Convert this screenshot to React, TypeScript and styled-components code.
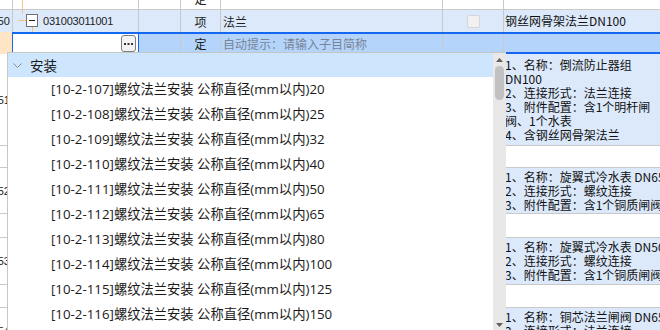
import React from 'react';
import styled, { createGlobalStyle } from 'styled-components';

const GlobalStyle = createGlobalStyle`
  html, body {
    margin: 0;
    padding: 0;
    background: #fff;
    overflow: hidden;
  }
  body {
    width: 660px;
    height: 330px;
    font-family: 'Noto Sans CJK SC', sans-serif;
  }
`;

const LINE = '#c9c9c9';
const ROW_BLUE = '#dce9fb';
const SEL_BLUE = '#b4d4fb';
const FOCUS = '#1367f0';

type descRow = {
	num: string;
	height: number;
	lines: string[];
};

const descRows: descRow[] = [
	{
		num: '51',
		height: 91,
		lines: [
			'1、名称：倒流防止器组',
			'DN100',
			'2、连接形式：法兰连接',
			'3、附件配置：含1个明杆闸',
			'阀、1个水表',
			'4、含钢丝网骨架法兰',
		],
	},
	{
		num: '52',
		height: 45,
		lines: ['1、名称：旋翼式冷水表 DN65', '2、连接形式：螺纹连接', '3、附件配置：含1个铜质闸阀'],
	},
	{
		num: '53',
		height: 46,
		lines: ['1、名称：旋翼式冷水表 DN50', '2、连接形式：螺纹连接', '3、附件配置：含1个铜质闸阀'],
	},
	{
		num: '54',
		height: 46,
		lines: ['1、名称：铜芯法兰闸阀 DN65', '2、连接形式：法兰连接', '3、附件配置：含1个铜质闸阀'],
	},
];

const childHeights = [21, 23, 22];

const items = [
	['107', '20'],
	['108', '25'],
	['109', '32'],
	['110', '40'],
	['111', '50'],
	['112', '65'],
	['113', '80'],
	['114', '100'],
	['115', '125'],
	['116', '150'],
];

function TreeLines({ top }: { top?: boolean }) {
	if (top) {
		return (
			<TreeSvg width='30' height='22'>
				<line x1='9.5' y1='0' x2='9.5' y2='22' stroke='#f5c47c' />
			</TreeSvg>
		);
	}
	return (
		<TreeSvg width='30' height='22'>
			<line x1='9.5' y1='0' x2='9.5' y2='4' stroke='#f5c47c' />
			<line x1='5' y1='10.5' x2='13' y2='10.5' stroke='#f5c47c' />
			<line x1='19.5' y1='17' x2='19.5' y2='22' stroke='#f5c47c' />
			<rect x='13.5' y='4.5' width='11' height='12' fill='#fff' stroke='#6f6f6f' />
			<line x1='16' y1='10.5' x2='22' y2='10.5' stroke='#222' />
		</TreeSvg>
	);
}

function App() {
	return (
		<>
			<GlobalStyle />
			<Sheet>
				<Rows>
					{/* partly hidden row above */}
					<Row $h={22}>
						<NumCell />
						<CodeCell>
							<TreeLines top />
						</CodeCell>
						<Cell $w={42} />
						<TypeCell>定</TypeCell>
						<NameCell />
						<Cell $w={61} />
						<DescCell />
					</Row>

					<Row $h={22} $bg={ROW_BLUE} $noLine>
						<NumCell $bg={ROW_BLUE}>50</NumCell>
						<CodeCell>
							<TreeLines />
							<CodeText>031003011001</CodeText>
						</CodeCell>
						<Cell $w={42} />
						<TypeCell>项</TypeCell>
						<NameCell>法兰</NameCell>
						<CheckCell>
							<Check />
						</CheckCell>
						<DescCell>
							<DescLine>钢丝网骨架法兰DN100</DescLine>
						</DescCell>
					</Row>

					<Row $h={22} $noLine>
						<NumCell $bg='#fde5c6' $noBorder />
						<EditBody>
							<InputCell>
								<DotsButton>
									<svg width='9' height='2'>
										<rect x='0' y='0' width='2' height='2' fill='#333' />
										<rect x='3.5' y='0' width='2' height='2' fill='#333' />
										<rect x='7' y='0' width='2' height='2' fill='#333' />
									</svg>
								</DotsButton>
							</InputCell>
							<Cell $w={42} $sel />
							<TypeCell $sel>定</TypeCell>
							<NameCell $sel $hint>
								自动提示：请输入子目简称
							</NameCell>
							<Cell $w={61} $sel />
							<DescCell $sel />
						</EditBody>
					</Row>

					{/* rows under the popup: only the row number and description edges show */}
					{descRows.map((r, i) => (
						<React.Fragment key={r.num}>
							<Row $h={r.height} $bg={ROW_BLUE}>
								<NumCell $bg='#fff'>{r.num}</NumCell>
								<CodeCell />
								<Cell $w={42} />
								<TypeCell />
								<NameCell />
								<Cell $w={61} />
								<DescCell>
									{r.lines.map((l) => (
										<DescLine key={l}>{l}</DescLine>
									))}
								</DescCell>
							</Row>
							{i < childHeights.length && (
								<Row $h={childHeights[i]}>
									<NumCell />
									<CodeCell />
									<Cell $w={42} />
									<TypeCell />
									<NameCell />
									<Cell $w={61} />
									<DescCell />
								</Row>
							)}
						</React.Fragment>
					))}
				</Rows>

				<Dropdown>
					<List>
						<Group>
							<svg width='9' height='6'>
								<polyline points='0.5,0.5 4.5,4.5 8.5,0.5' fill='none' stroke='#8c8c8c' />
							</svg>
							<span>安装</span>
						</Group>
						{items.map(([code, dn]) => (
							<Item key={code}>
								[10-2-{code}]螺纹法兰安装 公称直径(mm以内){dn}
							</Item>
						))}
					</List>
					<Scrollbar>
						<svg width='7' height='4'>
							<polygon points='0,4 3.5,0 7,4' fill='#606060' />
						</svg>
						<Thumb />
						<DownArrow width='7' height='4'>
							<polygon points='0,0 7,0 3.5,4' fill='#606060' />
						</DownArrow>
					</Scrollbar>
				</Dropdown>
			</Sheet>
		</>
	);
}

const Sheet = styled.div`
	position: relative;
	width: 660px;
	height: 330px;
	overflow: hidden;
	background: #fff;
`;

const Rows = styled.div`
	display: flex;
	flex-direction: column;
	width: 700px;
	margin-top: -13px;
`;

const Row = styled.div<{ $h: number; $bg?: string; $noLine?: boolean }>`
	display: flex;
	flex-shrink: 0;
	height: ${(p) => p.$h}px;
	background: ${(p) => p.$bg || '#fff'};
	border-bottom: ${(p) => (p.$noLine ? 'none' : `1px solid ${LINE}`)};
	font-size: 12px;
	color: #1e1e1e;
`;

const Cell = styled.div<{ $w: number; $sel?: boolean }>`
	flex: 0 0 ${(p) => p.$w}px;
	box-sizing: border-box;
	height: 100%;
	border-right: 1px solid ${LINE};
	background: ${(p) => (p.$sel ? SEL_BLUE : 'transparent')};
	overflow: hidden;
	white-space: nowrap;
	display: flex;
	align-items: center;
`;

const NumCell = styled.div<{ $bg?: string; $noBorder?: boolean }>`
	flex: 0 0 ${(p) => (p.$noBorder ? 12 : 13)}px;
	box-sizing: border-box;
	height: 100%;
	border-right: ${(p) => (p.$noBorder ? 'none' : `1px solid ${LINE}`)};
	background: ${(p) => p.$bg || '#fff'};
	display: flex;
	align-items: center;
	justify-content: flex-end;
	padding-right: 2px;
	overflow: hidden;
	font-family: 'Liberation Sans', sans-serif;
	font-size: 11px;
	color: #222;
`;

const CodeCell = styled(Cell).attrs({ $w: 126 })``;

const TreeSvg = styled.svg`
	flex: 0 0 30px;
	display: block;
`;

const CodeText = styled.span`
	font-family: 'Liberation Sans', sans-serif;
	font-size: 11px;
	letter-spacing: -0.2px;
	color: #222;
`;

const TypeCell = styled(Cell).attrs({ $w: 40 })`
	justify-content: center;
`;

const NameCell = styled(Cell).attrs({ $w: 222 })<{ $hint?: boolean }>`
	padding-left: 2px;
	color: ${(p) => (p.$hint ? '#788596' : '#1e1e1e')};
`;

const CheckCell = styled(Cell).attrs({ $w: 61 })`
	justify-content: center;
`;

const Check = styled.div`
	width: 13px;
	height: 13px;
	box-sizing: border-box;
	border: 1px solid #d6d6d6;
	border-radius: 2px;
	background: #f1f1f1;
`;

const DescCell = styled(Cell).attrs({ $w: 170 })`
	flex-direction: column;
	align-items: flex-start;
	justify-content: center;
	padding-left: 1px;
	border-right: none;
`;

const DescLine = styled.div`
	line-height: 14px;
	font-size: 12px;
	color: #111;
	white-space: nowrap;
`;

const EditBody = styled.div`
	display: flex;
	flex: 1;
	height: 100%;
	box-sizing: border-box;
	border-top: 2px solid ${FOCUS};
	border-bottom: 2px solid ${FOCUS};
`;

const InputCell = styled.div`
	flex: 0 0 127px;
	box-sizing: border-box;
	height: 100%;
	background: #fff;
	border-left: 1px solid ${FOCUS};
	border-right: 1px solid ${FOCUS};
	display: flex;
	align-items: center;
	justify-content: flex-end;
	padding-right: 2px;
`;

const DotsButton = styled.div`
	width: 15px;
	height: 17px;
	box-sizing: border-box;
	border: 1px solid #7e7e7e;
	border-radius: 3px;
	background: #f3f3f3;
	display: flex;
	align-items: center;
	justify-content: center;
	margin-top: 1px;
`;

const Dropdown = styled.div`
	position: absolute;
	left: 7px;
	top: 52px;
	width: 499px;
	height: 280px;
	box-sizing: border-box;
	border: 1px solid #c6c6c6;
	border-right: none;
	background: #fff;
	display: flex;
`;

const List = styled.div`
	flex: 1;
	overflow: hidden;
	font-family: 'Open Sans', 'Noto Sans CJK SC', sans-serif;
	font-size: 13.3px;
	color: #1a1a1a;
`;

const Group = styled.div`
	height: 24px;
	display: flex;
	align-items: center;
	gap: 8px;
	padding-left: 5px;
	background: #cde6fd;
	font-family: 'Noto Sans CJK SC', sans-serif;
	font-size: 13.5px;
	color: #1a1a1a;

	svg {
		display: block;
		margin-top: 1px;
	}
`;

const Item = styled.div`
	height: 25px;
	line-height: 25px;
	padding-left: 43px;
	white-space: nowrap;
`;

const Scrollbar = styled.div`
	flex: 0 0 13px;
	background: #e8e8e8;
	display: flex;
	flex-direction: column;
	align-items: center;
	padding: 5px 0 4px;
	box-sizing: border-box;

	svg {
		display: block;
	}
`;

const Thumb = styled.div`
	width: 9px;
	height: 34px;
	margin-top: 4px;
	border-radius: 5px;
	background: #c1c1c1;
`;

const DownArrow = styled.svg`
	margin-top: auto;
`;

export default App;
